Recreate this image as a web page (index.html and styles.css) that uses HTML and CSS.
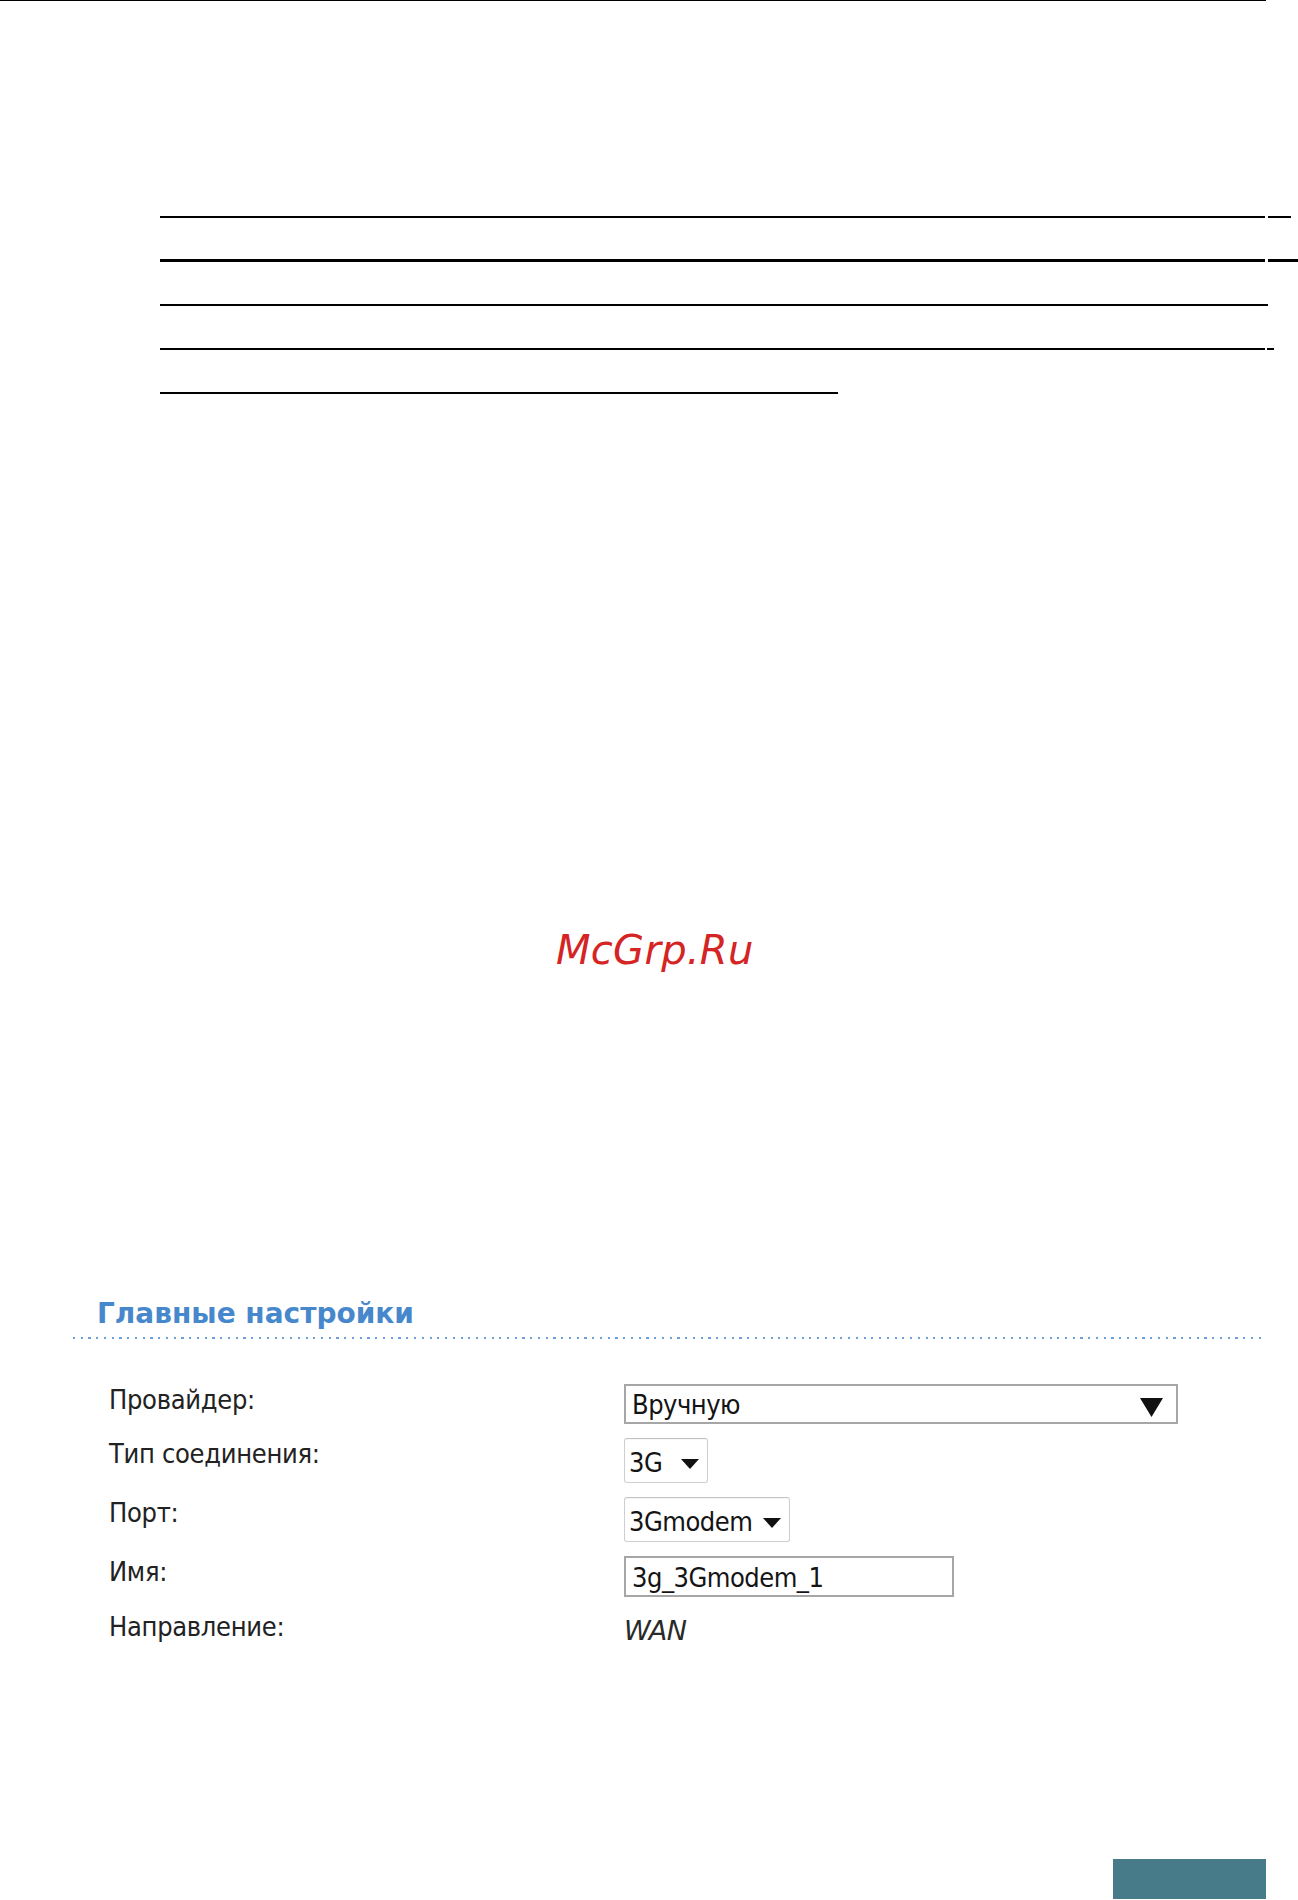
FILE: index.html
```html
<!DOCTYPE html>
<html lang="ru">
<head>
<meta charset="utf-8">
<title>Главные настройки</title>
<link rel="stylesheet" href="styles.css">
</head>
<body>
<div class="page">
  <div class="topline"></div>

  <div class="lines">
    <div class="uline l1"><span class="seg a"></span><span class="seg b"></span></div>
    <div class="uline l2"><span class="seg a"></span><span class="seg b"></span></div>
    <div class="uline l3"><span class="seg a"></span></div>
    <div class="uline l4"><span class="seg a"></span><span class="seg b"></span></div>
    <div class="uline l5"><span class="seg a"></span></div>
  </div>

  <div class="watermark">McGrp.Ru</div>

  <h2 class="section-title">Главные настройки</h2>
  <div class="dotted"></div>

  <div class="form">
    <div class="row">
      <div class="label">Провайдер:</div>
      <div class="field">
        <div class="ctl select-big">
          <span class="val">Вручную</span>
          <svg class="arrow-big" width="23" height="19" viewBox="0 0 23 19"><polygon points="0,0 23,0 11.5,19" fill="#111"/></svg>
        </div>
      </div>
    </div>
    <div class="row">
      <div class="label">Тип соединения:</div>
      <div class="field">
        <div class="ctl select-small w-3g">
          <span class="val">3G</span>
          <svg class="arrow-small" width="18" height="10" viewBox="0 0 18 10"><polygon points="0,0 18,0 9,10" fill="#111"/></svg>
        </div>
      </div>
    </div>
    <div class="row">
      <div class="label">Порт:</div>
      <div class="field">
        <div class="ctl select-small w-modem">
          <span class="val">3Gmodem</span>
          <svg class="arrow-small" width="18" height="10" viewBox="0 0 18 10"><polygon points="0,0 18,0 9,10" fill="#111"/></svg>
        </div>
      </div>
    </div>
    <div class="row">
      <div class="label">Имя:</div>
      <div class="field">
        <div class="ctl text-input"><span class="val">3g_3Gmodem_1</span></div>
      </div>
    </div>
    <div class="row">
      <div class="label">Направление:</div>
      <div class="field"><span class="static">WAN</span></div>
    </div>
  </div>

  <div class="footer-bar">
    <div class="tab"></div>
  </div>
</div>
</body>
</html>
```

FILE: styles.css
```css
html, body {
  margin: 0;
  padding: 0;
  background: #ffffff;
}

.page {
  width: 1298px;
  height: 1900px;
  overflow: hidden;
  font-family: "DejaVu Sans Condensed", "DejaVu Sans", sans-serif;
  color: #222;
}

.topline {
  width: 1266px;
  height: 1px;
  background: #000;
}

.lines {
  padding-left: 160px;
  padding-top: 215px;
}

.uline {
  display: flex;
  align-items: flex-start;
}

.seg {
  display: block;
  background: #000;
}

.l1 .a, .l2 .a, .l4 .a { width: 1105px; }
.l1 .b { width: 23px; margin-left: 3px; }
.l2 .b { width: 30px; margin-left: 3px; }
.l4 .b { width: 7px; margin-left: 2px; }
.l3 .a { width: 1108px; }
.l5 .a { width: 678px; }

.l1 .seg, .l3 .seg, .l4 .seg, .l5 .seg { height: 2px; }
.l2 .seg { height: 3px; }

.l2 { margin-top: 41px; }
.l3, .l4, .l5 { margin-top: 42px; }

.watermark {
  margin-top: 533px;
  padding-left: 556px;
  font-family: "DejaVu Sans", sans-serif;
  font-style: oblique;
  font-size: 40px;
  line-height: 46px;
  color: #d42424;
  letter-spacing: 0.3px;
}

.section-title {
  margin: 324px 0 0 0;
  padding-left: 97px;
  font-family: "DejaVu Sans", sans-serif;
  font-weight: bold;
  font-size: 28px;
  line-height: 33px;
  color: #4788cc;
}

.dotted {
  margin-top: 7px;
  margin-left: 73px;
  width: 1193px;
  height: 2px;
  background: repeating-linear-gradient(to right, #6a9fd9 0 2px, transparent 2px 7.75px);
}

.form {
  margin-top: 45px;
  padding-left: 109px;
  display: flex;
  flex-direction: column;
  gap: 14px;
  font-size: 27px;
}

.row {
  display: grid;
  grid-template-columns: 515px auto;
  align-items: start;
}

.label {
  line-height: 31px;
  color: #222;
  letter-spacing: -0.3px;
}

.field {
  display: flex;
}

.ctl {
  box-sizing: border-box;
  display: flex;
  align-items: center;
  background: #fff;
  color: #141414;
  line-height: 31px;
}

.ctl .val {
  white-space: nowrap;
  letter-spacing: -0.5px;
}

.select-big {
  width: 554px;
  height: 40px;
  border: 2px solid #a6a6a6;
  padding-left: 6px;
  padding-right: 13px;
  justify-content: space-between;
}

.arrow-big {
  margin-top: 7px;
}

.select-small {
  height: 45px;
  border: 1px solid #cfcfcf;
  border-top-color: #c2c2c2;
  border-radius: 3px;
  padding-left: 4px;
  padding-right: 8px;
  justify-content: space-between;
  box-shadow: inset 0 1px 1px rgba(0,0,0,0.04);
}

.select-small .val {
  margin-top: 3px;
}

.arrow-small {
  margin-top: 7px;
}

.w-3g { width: 84px; }
.w-modem { width: 166px; }

.text-input {
  width: 330px;
  height: 41px;
  border: 2px solid #a6a6a6;
  padding-left: 6px;
}

.text-input .val {
  margin-top: 2px;
}

.static {
  font-family: "DejaVu Sans", sans-serif;
  font-style: oblique;
  line-height: 31px;
  padding-top: 4px;
  color: #2a2a2a;
  letter-spacing: -0.5px;
}

.footer-bar {
  margin-top: 213px;
  display: flex;
  padding-left: 1113px;
}

.tab {
  width: 153px;
  height: 40px;
  background: #477b8a;
}
```
